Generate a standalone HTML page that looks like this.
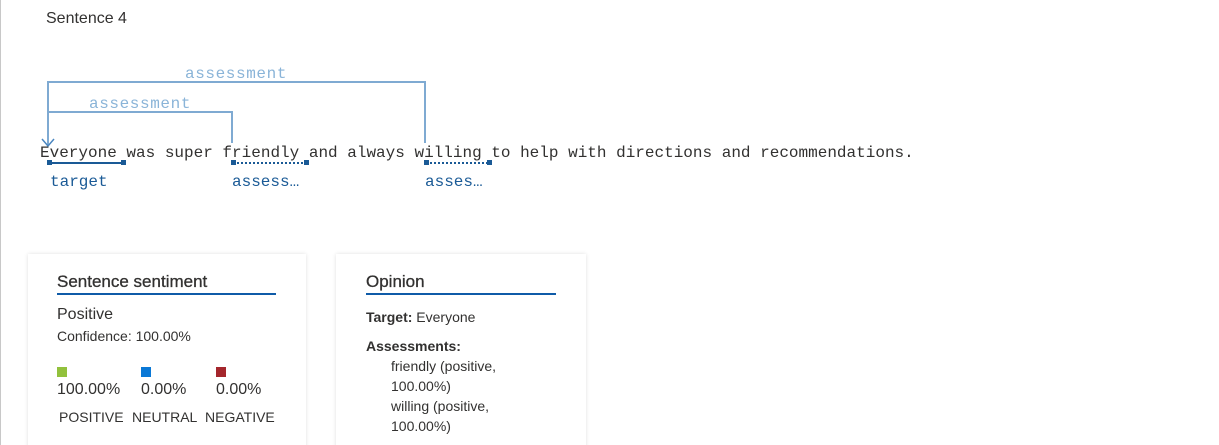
<!DOCTYPE html>
<html><head><style>
html,body{margin:0;width:1219px;height:445px;overflow:hidden}
body{background:#fff;position:relative;font-family:"Liberation Sans",sans-serif;color:#323130}
.a{position:absolute;white-space:nowrap}
.m{font-family:"Liberation Mono",monospace;font-size:16px}
.card{position:absolute;top:254px;height:200px;background:#fff;box-shadow:0 0 4px rgba(0,0,0,.12)}
.h{position:absolute;font-size:17px;color:#323130;border-bottom:2px solid #0f5ba8;padding-bottom:1px;-webkit-text-stroke:0.3px #323130}
</style></head><body>
<div class="a" style="left:0;top:0;width:1px;height:445px;background:#c8c8c8"></div>
<div class="a" style="left:46px;top:10px;font-size:16px">Sentence 4</div>
<svg class="a" style="left:0;top:0" width="600" height="200">
<g fill="none" stroke="#7faad2" stroke-width="2">
<path d="M48 146V82H425V143"/>
<path d="M48 112H232V143"/>
</g>
<path d="M42 139L48 146L54 139" fill="none" stroke="#4a86c0" stroke-width="1.5"/>
<g stroke="#1a5a96" stroke-width="2">
<path d="M49 163H124"/>
<path d="M233 163H307" stroke-dasharray="2 2"/>
<path d="M426 163H490" stroke-dasharray="2 2"/>
</g>
<g fill="#1a5a96"><rect x="47" y="160" width="5" height="5"/><rect x="121" y="160" width="5" height="5"/><rect x="231" y="160" width="5" height="5"/><rect x="304" y="160" width="5" height="5"/><rect x="424" y="160" width="5" height="5"/><rect x="487" y="160" width="5" height="5"/></g>
</svg>
<div class="a m" style="left:185px;top:65px;color:#8ab4d8;letter-spacing:0.6px">assessment</div>
<div class="a m" style="left:89px;top:95px;color:#8ab4d8;letter-spacing:0.6px">assessment</div>
<div class="a m" style="left:40px;top:144px;color:#323130">Everyone was super friendly and always willing to help with directions and recommendations.</div>
<div class="a m" style="left:50px;top:173px;color:#1a5a96">target</div>
<div class="a m" style="left:232px;top:173px;color:#1a5a96">assess…</div>
<div class="a m" style="left:425px;top:173px;color:#1a5a96">asses…</div>

<div class="card" style="left:28px;width:278px"></div>
<div class="card" style="left:336px;width:250px"></div>
<div class="h" style="left:57px;top:272px;width:219px">Sentence sentiment</div>
<div class="a" style="left:57px;top:306px;font-size:16px">Positive</div>
<div class="a" style="left:57px;top:328px;font-size:14px">Confidence: 100.00%</div>
<div class="a" style="left:57px;top:367px;width:10px;height:10px;background:#92c13c"></div>
<div class="a" style="left:141px;top:367px;width:10px;height:10px;background:#0a78d6"></div>
<div class="a" style="left:216px;top:367px;width:10px;height:10px;background:#a4262c"></div>
<div class="a" style="left:57px;top:381px;font-size:16px">100.00%</div>
<div class="a" style="left:141px;top:381px;font-size:16px">0.00%</div>
<div class="a" style="left:216px;top:381px;font-size:16px">0.00%</div>
<div class="a" style="left:59px;top:409px;font-size:14px">POSITIVE</div>
<div class="a" style="left:132px;top:409px;font-size:14px">NEUTRAL</div>
<div class="a" style="left:205px;top:409px;font-size:14px">NEGATIVE</div>

<div class="h" style="left:366px;top:272px;width:190px">Opinion</div>
<div class="a" style="left:366px;top:309px;font-size:14px"><b style="font-weight:600">Target:</b> Everyone</div>
<div class="a" style="left:366px;top:338px;font-size:14px;font-weight:600">Assessments:</div>
<div class="a" style="left:391px;top:356px;font-size:14px;line-height:20px">friendly (positive,<br>100.00%)<br>willing (positive,<br>100.00%)</div>
</body></html>
